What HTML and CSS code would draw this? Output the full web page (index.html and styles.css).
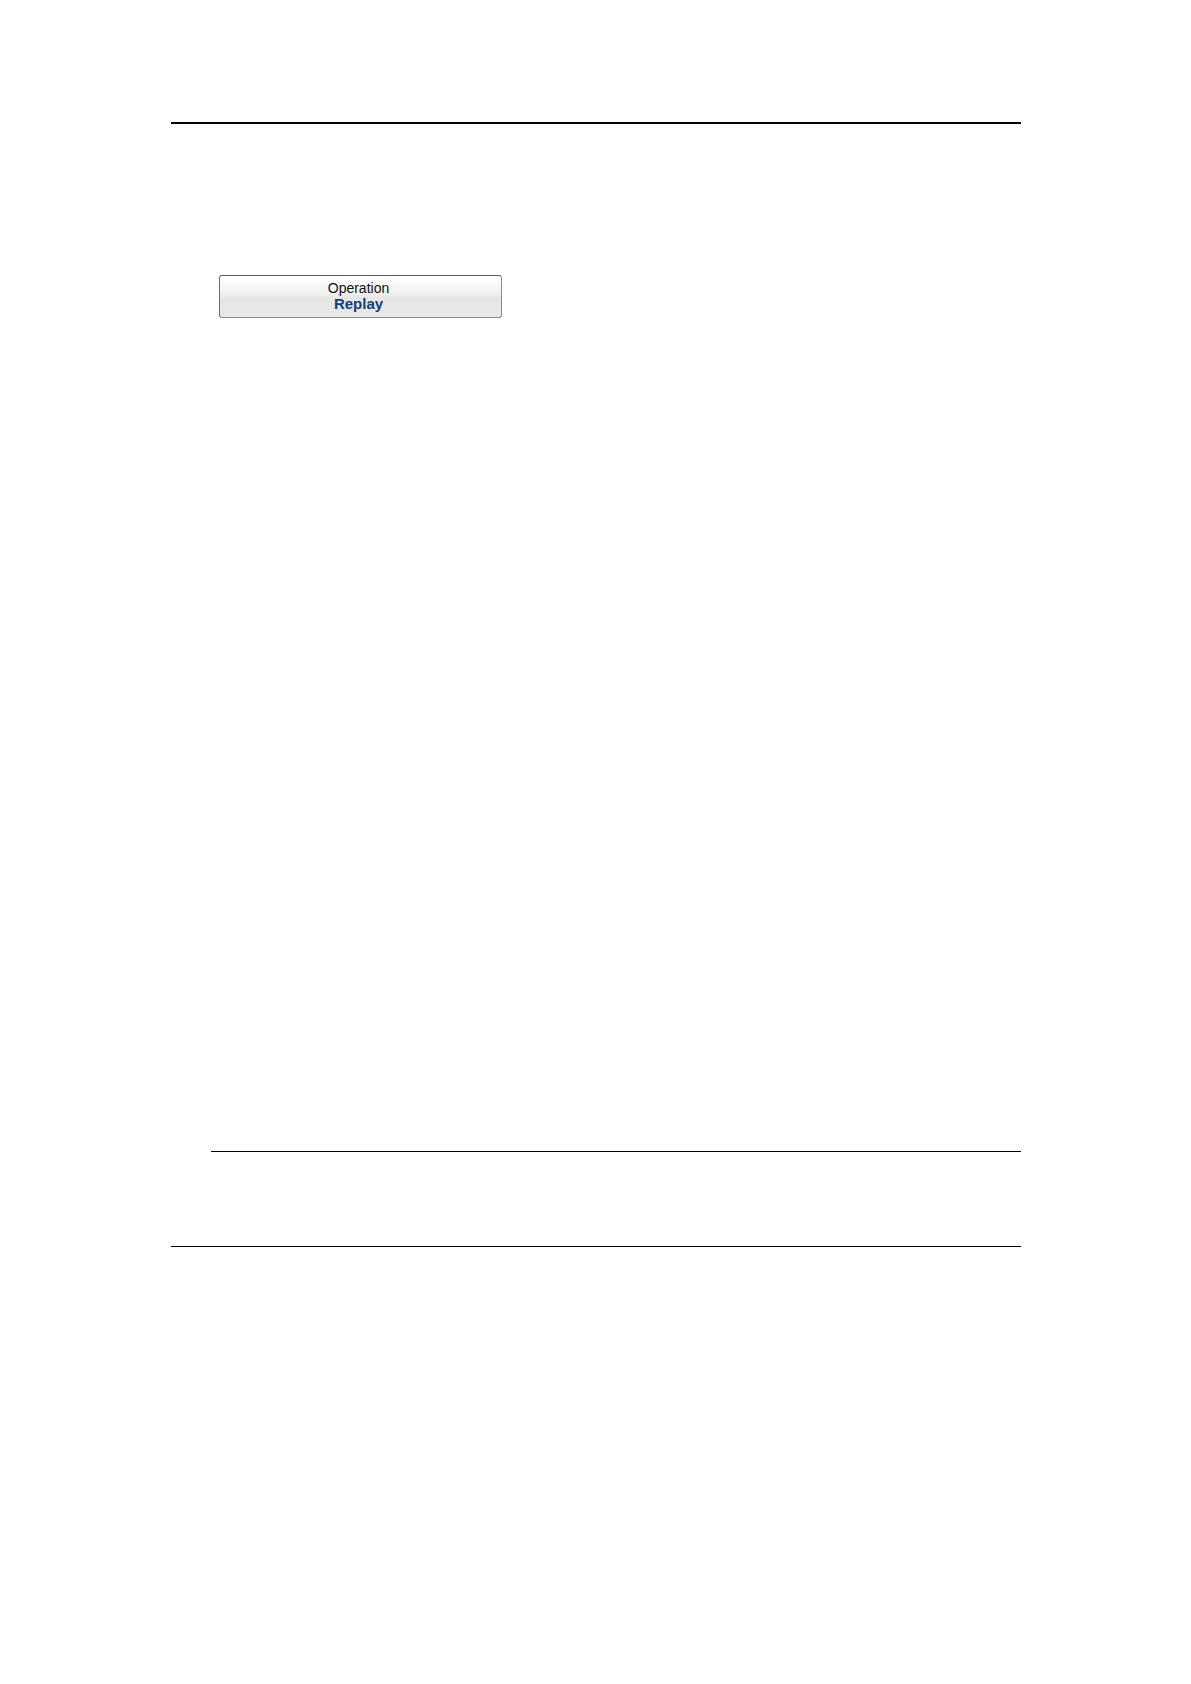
FILE: index.html
```html
<!DOCTYPE html>
<html lang="en">
<head>
  <meta charset="UTF-8">
  <meta name="viewport" content="width=device-width, initial-scale=1.0">
  <title>Operation: Replay</title>
  <link rel="stylesheet" href="styles.css">
</head>
<body>

  <main class="page">
    <hr class="rule rule-top">

    <section class="content">
      <button type="button" class="operation-button">
        <span class="button-label">Operation</span>
        <span class="button-value">Replay</span>
      </button>
    </section>

    <hr class="rule rule-note">
    <hr class="rule rule-bottom">
  </main>

</body>
</html>
```

FILE: styles.css
```css
* {
  margin: 0;
  padding: 0;
  box-sizing: border-box;
}

body {
  font-family: "Liberation Sans", Arial, sans-serif;
  background-color: #ffffff;
}

.page {
  padding: 122px 170px 0 171px;
}

.rule {
  border: none;
  border-top: 1px solid #000000;
}

.rule-top {
  border-top-width: 2px;
}

.content {
  min-height: 1027px;
  padding: 151px 48px 0;
}

.operation-button {
  display: flex;
  flex-direction: column;
  align-items: center;
  justify-content: center;
  width: 283px;
  max-width: 100%;
  height: 43px;
  padding: 0 4px 2px 0;
  border: 1px solid #8c8c8c;
  border-top-color: #5c5c5c;
  border-left-color: #6c6c6c;
  border-radius: 3px;
  background: linear-gradient(#ffffff 0%, #f2f2f2 40%, #e6e6e6 55%, #e8e8e8 100%);
  font-family: inherit;
  line-height: 16px;
  cursor: pointer;
}

.button-label {
  font-size: 14px;
  color: #111111;
}

.button-value {
  font-size: 15px;
  font-weight: bold;
  color: #123f78;
}

.rule-note {
  margin: 0 0 94px 40px;
}
```
